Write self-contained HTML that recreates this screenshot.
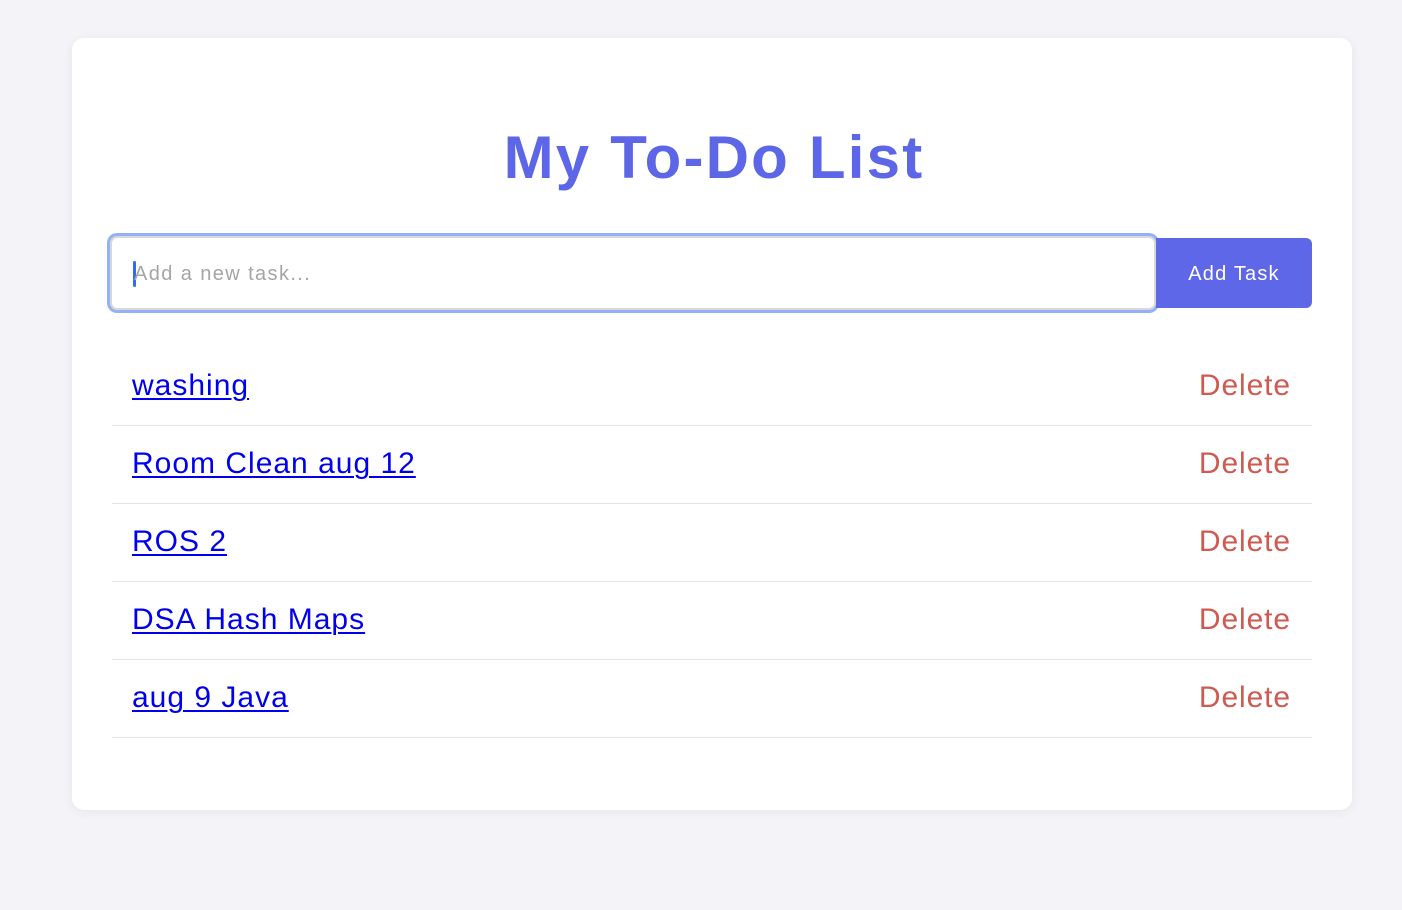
<!DOCTYPE html>
<html><head><style>
body{margin:0;background:#f3f3f8;font-family:"Liberation Sans",Arial,sans-serif;width:1402px;height:910px;overflow:hidden}
.card{position:absolute;left:72px;top:38px;width:1280px;height:772px;background:#fff;border-radius:12px;box-shadow:0 2px 10px rgba(0,0,0,0.06)}
h1{position:absolute;left:74px;width:1280px;top:122px;margin:0;text-align:center;font-size:60px;letter-spacing:2.2px;font-weight:bold;color:#5d66e6;line-height:72px}
.inp{position:absolute;left:110px;top:236px;width:1046px;height:74px;box-sizing:border-box;border:2px solid #d8d8d8;border-radius:7px;box-shadow:0 0 0 3px #93b1f3;background:#fff}
.inp span{position:absolute;left:22px;top:25px;font-size:20px;letter-spacing:1.4px;color:#a5a5a5}
.inp i{position:absolute;left:21px;top:23px;width:3px;height:26px;background:#2f6fef;border-radius:2px}
.btn{position:absolute;left:1156px;top:238px;width:156px;height:70px;background:#5f67e9;border-radius:0 6px 6px 0;color:#fff;font-size:20px;letter-spacing:1.2px;text-align:center;line-height:72px}
.row{position:absolute;left:112px;width:1200px;height:77px;border-bottom:1px solid #e3e3e3}
.row a{position:absolute;left:20px;top:21px;font-size:30px;letter-spacing:1px;color:#0000ee;text-decoration:underline;text-decoration-thickness:2px;text-underline-offset:3px}
.row b{position:absolute;right:21px;top:21px;font-size:30px;letter-spacing:0.9px;color:#cf5a52;font-weight:normal}
</style></head><body>
<div class="card"></div>
<h1>My To-Do List</h1>
<div class="inp"><i></i><span>Add a new task...</span></div>
<div class="btn">Add Task</div>
<div class="row" style="top:348px"><a>washing</a><b>Delete</b></div>
<div class="row" style="top:426px"><a>Room Clean aug 12</a><b>Delete</b></div>
<div class="row" style="top:504px"><a>ROS 2</a><b>Delete</b></div>
<div class="row" style="top:582px"><a>DSA Hash Maps</a><b>Delete</b></div>
<div class="row" style="top:660px"><a>aug 9 Java</a><b>Delete</b></div>
</body></html>
